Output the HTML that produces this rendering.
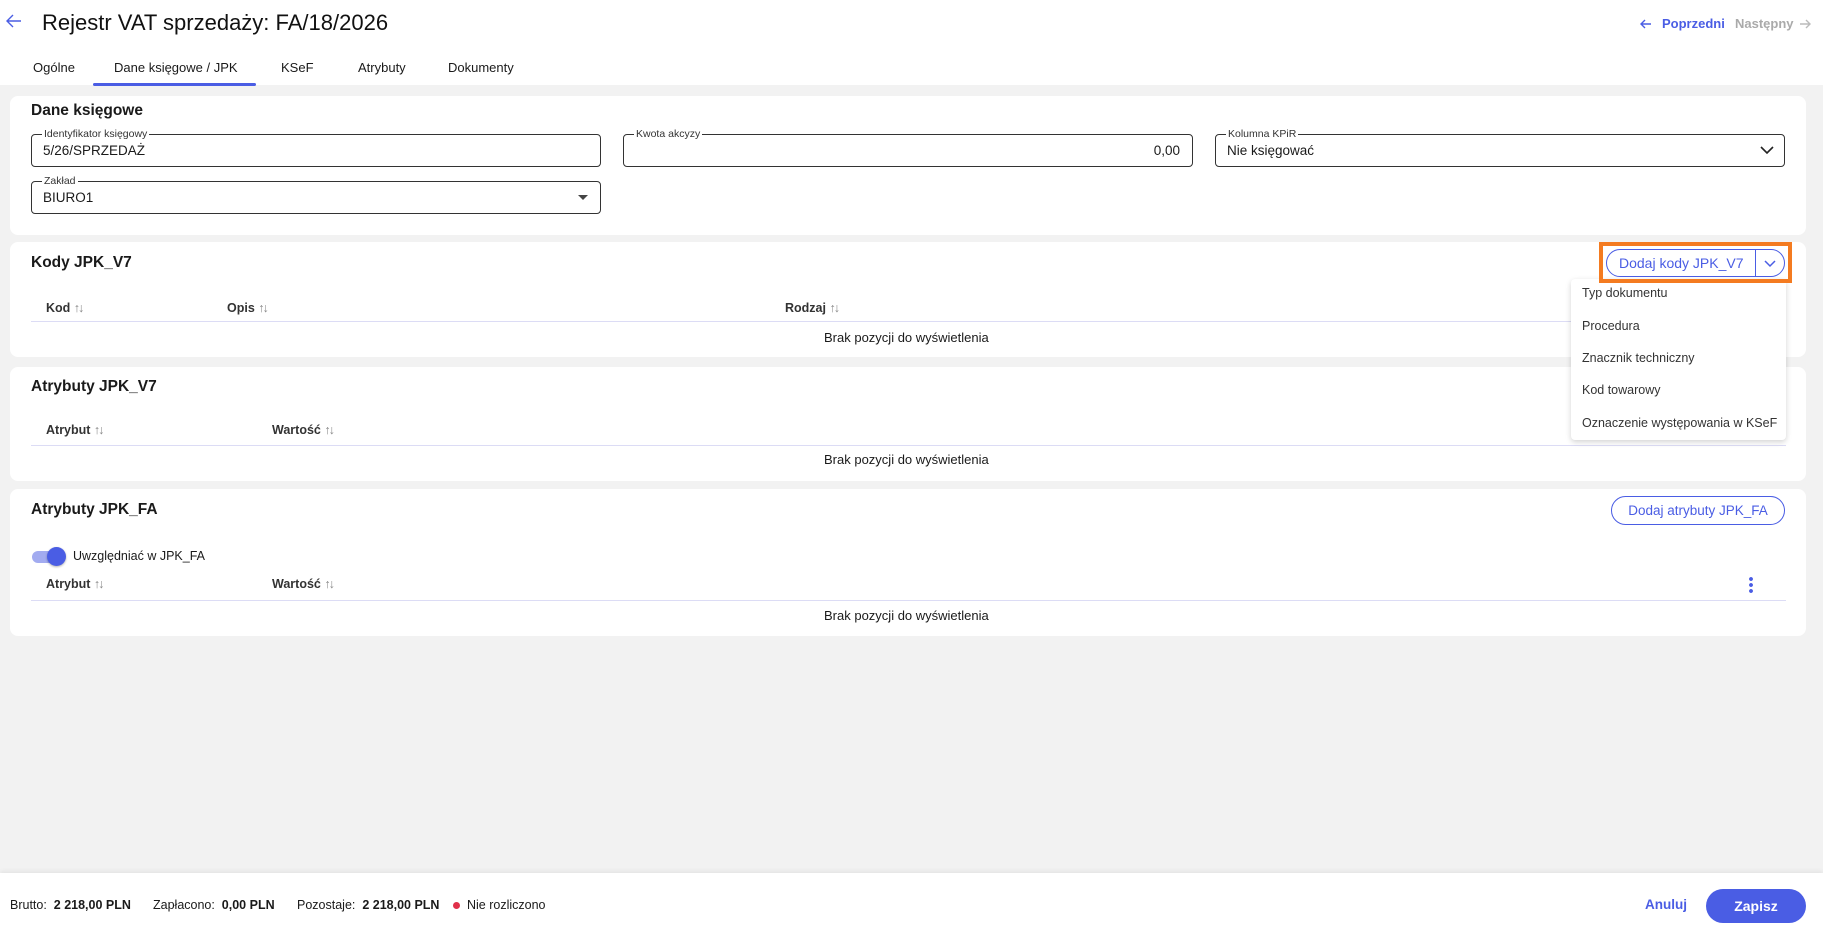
<!DOCTYPE html>
<html><head><meta charset="utf-8"><style>
*{box-sizing:border-box;margin:0;padding:0}
body{width:1823px;height:931px;background:#f2f2f2;font-family:"Liberation Sans",sans-serif;color:#1a1a1a;position:relative;overflow:hidden;font-size:14px}
.a{position:absolute;white-space:nowrap}
.top{left:0;top:0;width:1823px;height:85px;background:#fff}
.card{position:absolute;left:10px;width:1796px;background:#fff;border-radius:8px}
.h{font-size:15.5px;font-weight:bold;color:#1a1a1a}
.fld{position:absolute;border:1px solid #333;border-radius:4px;height:33px}
.fld .lb{position:absolute;top:-8px;left:10px;background:#fff;padding:0 2px;font-size:10.5px;color:#333;line-height:14px}
.fld .v{position:absolute;top:8px;left:11px;font-size:13.5px}
.th{font-size:12.5px;font-weight:bold;color:#333}
.th span{font-weight:normal;color:#888;letter-spacing:-2px}
.line{position:absolute;height:1px;background:#dcdcf5}
.brak{font-size:13px;color:#1a1a1a}
.blue{color:#4a5de4}
.mi{position:absolute;font-size:12.5px;color:#333}
</style></head><body>
<div class="a top"></div>
<svg class="a" style="left:5px;top:13px" width="18" height="16" viewBox="0 0 18 16"><path d="M16 8H2M8 2L2 8l6 6" fill="none" stroke="#4a5de4" stroke-width="1.4"/></svg>
<div class="a" style="left:42px;top:10px;font-size:22px;color:#111">Rejestr VAT sprzedaży: FA/18/2026</div>
<svg class="a" style="left:1640px;top:18px" width="12" height="12" viewBox="0 0 12 12"><path d="M11 6H1M5 2L1 6l4 4" fill="none" stroke="#4a5de4" stroke-width="1.4"/></svg>
<div class="a blue" style="left:1662px;top:16px;font-size:13px;font-weight:bold">Poprzedni</div>
<div class="a" style="left:1735px;top:16px;font-size:13px;font-weight:bold;color:#aaa">Następny</div>
<svg class="a" style="left:1799px;top:18px" width="12" height="12" viewBox="0 0 12 12"><path d="M1 6h10M7 2l4 4-4 4" fill="none" stroke="#bbb" stroke-width="1.4"/></svg>
<div class="a" style="left:33px;top:60px;font-size:13px">Ogólne</div>
<div class="a" style="left:114px;top:60px;font-size:13px">Dane księgowe / JPK</div>
<div class="a" style="left:281px;top:60px;font-size:13px">KSeF</div>
<div class="a" style="left:358px;top:60px;font-size:13px">Atrybuty</div>
<div class="a" style="left:448px;top:60px;font-size:13px">Dokumenty</div>
<div class="a" style="left:93px;top:83px;width:163px;height:3px;background:#4a5de4;border-radius:2px"></div>

<div class="card" style="top:96px;height:139px">
 <div class="a h" style="left:21px;top:6px">Dane księgowe</div>
 <div class="fld" style="left:21px;top:38px;width:570px"><div class="lb">Identyfikator księgowy</div><div class="v">5/26/SPRZEDAŻ</div></div>
 <div class="fld" style="left:613px;top:38px;width:570px"><div class="lb">Kwota akcyzy</div><div class="v" style="left:auto;right:12px">0,00</div></div>
 <div class="fld" style="left:1205px;top:38px;width:570px"><div class="lb">Kolumna KPiR</div><div class="v">Nie księgować</div>
  <svg class="a" style="right:10px;top:10px" width="14" height="10" viewBox="0 0 14 10"><path d="M1 2l6 6 6-6" fill="none" stroke="#222" stroke-width="1.6"/></svg></div>
 <div class="fld" style="left:21px;top:85px;width:570px"><div class="lb">Zakład</div><div class="v">BIURO1</div>
  <div class="a" style="right:12px;top:13px;width:0;height:0;border-left:5px solid transparent;border-right:5px solid transparent;border-top:5px solid #444"></div></div>
</div>

<div class="card" style="top:242px;height:115px">
 <div class="a h" style="left:21px;top:12px">Kody JPK_V7</div>
 <div class="a th" style="left:36px;top:59px">Kod <span>↑↓</span></div>
 <div class="a th" style="left:217px;top:59px">Opis <span>↑↓</span></div>
 <div class="a th" style="left:775px;top:59px">Rodzaj <span>↑↓</span></div>
 <div class="line" style="left:21px;top:79px;width:1755px"></div>
 <div class="a brak" style="left:814px;top:88px">Brak pozycji do wyświetlenia</div>
</div>

<div class="card" style="top:367px;height:114px">
 <div class="a h" style="left:21px;top:11px">Atrybuty JPK_V7</div>
 <div class="a th" style="left:36px;top:56px">Atrybut <span>↑↓</span></div>
 <div class="a th" style="left:262px;top:56px">Wartość <span>↑↓</span></div>
 <div class="line" style="left:21px;top:78px;width:1755px"></div>
 <div class="a brak" style="left:814px;top:85px">Brak pozycji do wyświetlenia</div>
</div>

<div class="card" style="top:489px;height:147px">
 <div class="a h" style="left:21px;top:12px">Atrybuty JPK_FA</div>
 <div class="a blue" style="left:1601px;top:7px;width:174px;height:29px;border:1px solid #4a5de4;border-radius:15px;font-size:13.5px;text-align:center;line-height:27px">Dodaj atrybuty JPK_FA</div>
 <div class="a" style="left:22px;top:62px;width:30px;height:12px;background:#a2abf0;border-radius:6px"></div>
 <div class="a" style="left:37px;top:58px;width:19px;height:19px;background:#4a5de4;border-radius:50%;box-shadow:0 1px 2px rgba(0,0,0,.3)"></div>
 <div class="a" style="left:63px;top:60px;font-size:12.5px">Uwzględniać w JPK_FA</div>
 <div class="a th" style="left:36px;top:88px">Atrybut <span>↑↓</span></div>
 <div class="a th" style="left:262px;top:88px">Wartość <span>↑↓</span></div>
 <div class="a" style="left:1739px;top:87px;width:4px;height:18px;background:radial-gradient(circle,#4a5de4 1.8px,transparent 2px) 0 0/4px 6px"></div>
 <div class="line" style="left:21px;top:111px;width:1755px"></div>
 <div class="a brak" style="left:814px;top:119px">Brak pozycji do wyświetlenia</div>
</div>

<div class="a" style="left:1571px;top:279px;width:215px;height:161px;background:#fff;border-radius:4px;box-shadow:0 2px 6px rgba(0,0,0,.18)">
 <div class="mi" style="top:7px;left:11px">Typ dokumentu</div>
 <div class="mi" style="top:40px;left:11px">Procedura</div>
 <div class="mi" style="top:72px;left:11px">Znacznik techniczny</div>
 <div class="mi" style="top:104px;left:11px">Kod towarowy</div>
 <div class="mi" style="top:137px;left:11px">Oznaczenie występowania w KSeF</div>
</div>

<div class="a" style="left:1599px;top:242px;width:193px;height:41px;border:4px solid #f47b20"></div>
<div class="a" style="left:1606px;top:249px;width:179px;height:28px;border:1px solid #4a5de4;border-radius:14px;background:#fff"></div>
<div class="a blue" style="left:1619px;top:255px;font-size:14px">Dodaj kody JPK_V7</div>
<div class="a" style="left:1755px;top:249px;width:1px;height:28px;background:#4a5de4"></div>
<svg class="a" style="left:1764px;top:258px" width="12" height="10" viewBox="0 0 12 10"><path d="M1 3l5 5 5-5" fill="none" stroke="#4a5de4" stroke-width="1.5"/></svg>

<div class="a" style="left:0;top:873px;width:1823px;height:58px;background:#fff;box-shadow:0 -2px 4px rgba(0,0,0,.06)"></div>
<div class="a" style="left:10px;top:898px;font-size:12.5px">Brutto: <b>&nbsp;2 218,00 PLN</b></div>
<div class="a" style="left:153px;top:898px;font-size:12.5px">Zapłacono: <b>&nbsp;0,00 PLN</b></div>
<div class="a" style="left:297px;top:898px;font-size:12.5px">Pozostaje: <b>&nbsp;2 218,00 PLN</b></div>
<div class="a" style="left:453px;top:902px;width:7px;height:7px;border-radius:50%;background:#e0304a"></div>
<div class="a" style="left:467px;top:898px;font-size:12.5px">Nie rozliczono</div>
<div class="a blue" style="left:1645px;top:897px;font-size:13.5px;font-weight:bold">Anuluj</div>
<div class="a" style="left:1706px;top:889px;width:100px;height:34px;background:#4a5de4;border-radius:17px;color:#fff;font-weight:bold;font-size:14px;text-align:center;line-height:34px">Zapisz</div>
</body></html>
